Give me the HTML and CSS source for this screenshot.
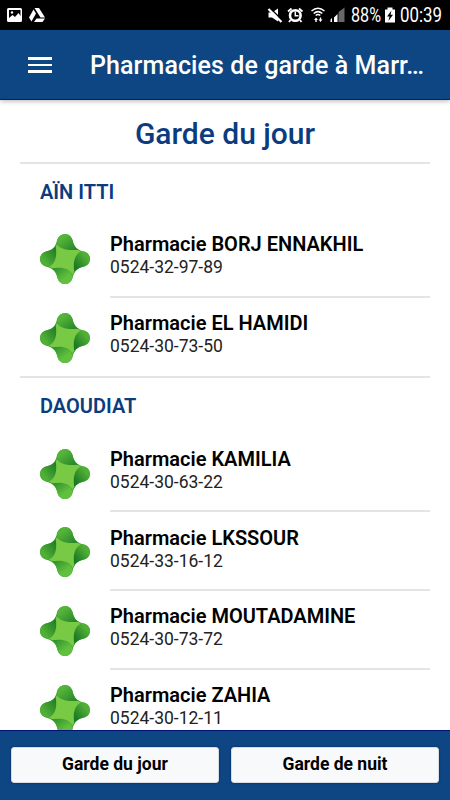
FILE: index.html
```
<!DOCTYPE html>
<html lang="fr">
<head>
<meta charset="utf-8">
<title>Pharmacies de garde</title>
<link rel="stylesheet" href="styles.css">
</head>
<body>
<svg class="defs" width="0" height="0" aria-hidden="true">
  <defs>
    <linearGradient id="top" x1="0" y1="0" x2="1" y2="1"><stop offset=".25" stop-color="#55b53a"/><stop offset=".95" stop-color="#238127"/></linearGradient>
    <linearGradient id="right" x1="1" y1="0" x2="0" y2="1"><stop offset=".25" stop-color="#50b036"/><stop offset=".8" stop-color="#1d7924"/></linearGradient>
    <linearGradient id="bottom" x1="1" y1="1" x2="0" y2="0"><stop offset=".35" stop-color="#61c03e"/><stop offset=".95" stop-color="#2b8c2b"/></linearGradient>
    <linearGradient id="left" x1="0" y1="1" x2="1" y2="0"><stop offset=".25" stop-color="#50b036"/><stop offset=".85" stop-color="#237f27"/></linearGradient>
    <symbol id="cross" viewBox="0 0 50 50">
      <path fill="#45a633" d="M17 6C20-2 30-2 32.500 6C34 13 38 16.500 44 17.500C52 20 52 30 44 32.500C37 34 34 38 32.500 44C30 52 20 52 17.500 44C16 37 12 34 6 32.500C-2 30-2 20 6 17.500C13 16 16 12 17 6Z"/>
      <path fill="url(#top)" d="M17 6C20-2 30-2 32.500 6Q34 14 39 16C27 18 18 14 17 6Z"/>
      <path fill="url(#right)" d="M44 17.500C52 20 52 30 44 32.500Q36 34 34 39C32 27 36 18 44 17.500Z"/>
      <path fill="url(#bottom)" d="M32.500 44C30 52 20 52 17.500 44Q16 36 11 34C23 32 32 36 32.500 44Z"/>
      <path fill="url(#left)" d="M6 32.500C-2 30-2 20 6 17.500Q14 16 16 11C18 23 14 32 6 32.500Z"/>
      <path fill="#78c943" d="M17 10C20 15 27 17 38 15.700Q39 17 41 17.500C35 20 32.500 27 34.300 38Q33 39 32.500 41C30 35 23 32.500 12 34.300Q11 33 9 32.500C15 30 17.500 23 15.700 12Q17 11.500 17 10Z"/>
    </symbol>
  </defs>
</svg>
<div class="screen">
  <div class="status">
    <svg width="450" height="30" viewBox="0 0 450 30">
      <g fill="#fff">
        <path fill-rule="evenodd" d="M8.500 8H20.500Q22 8 22 9.500V20.500Q22 22 20.500 22H8.500Q7 22 7 20.500V9.500Q7 8 8.500 8ZM9 10V18L12.500 15L15 17L18.500 13L20.500 16V10Z"/>
        <circle cx="12" cy="12.500" r="1.200"/>
        <path d="M34.500 8H39L45 17.500H40.500ZM33.500 9.500L36 13.500L31.500 21.500L29 17.500ZM36.500 18.500H45L42.500 22H34Z"/>
        <path d="M268.500 12.500H272L278 8.500V21.500L272 17.500H268.500Z"/>
        <path d="M314 20L316 17.500L318 20H316.700V22H315.300V20ZM318.500 19.500H319.800V17.500H321.200V19.500H322.500L320.500 22Z"/>
        <path d="M330.500 19.500L332 18V22H330.500ZM334 17.500L337.500 14V22H334Z"/>
        <path fill="#686868" d="M338.500 12L344.500 7.500V22H338.500Z"/>
        <path d="M387.500 7.500H392.500V9.500H395V22.500H385V9.500H387.500Z"/>
      </g>
      <path stroke="#000" stroke-width="1.500" d="M270.500 8.500L282 20"/>
      <path stroke="#fff" stroke-width="2.200" d="M268.500 9L281.500 22"/>
      <path d="M299 8.500L302.500 11.500M291.500 8.500L288 11.500M290.500 20L289 22M300 20L301.500 22" stroke="#fff" stroke-width="1.800"/>
      <circle cx="295.300" cy="15.500" r="5.300" fill="none" stroke="#fff" stroke-width="2.600"/>
      <path d="M295.300 11.500V15.800H298.500" fill="none" stroke="#fff" stroke-width="1.500"/>
      <g fill="none" stroke="#fff" stroke-width="1.500"><path d="M311.500 11Q318 5.500 324.500 11M313.700 13.500Q318 9.700 322.300 13.500M315.700 15.500Q318 13.700 320.300 15.500"/></g>
      <path d="M391.500 10.500L387 16.500H389.500L388.500 21L393 14.800H390.500Z"/>
      <g class="status-text"><text x="351" y="22" textLength="30" lengthAdjust="spacingAndGlyphs">88%</text><text x="400" y="22" textLength="42" lengthAdjust="spacingAndGlyphs">00:39</text></g>
    </svg>
  </div>
  <header class="toolbar">
    <div class="menu"><span></span><span></span><span></span></div>
    <h1>Pharmacies de garde à Marr…</h1>
  </header>
  <main class="content">
    <h2>Garde du jour</h2>
    <section>
      <h3>AÏN ITTI</h3>
      <div class="item"><svg class="logo"><use href="#cross"/></svg><div class="info"><strong>Pharmacie BORJ ENNAKHIL</strong><span>0524-32-97-89</span></div></div>
      <div class="item"><svg class="logo"><use href="#cross"/></svg><div class="info"><strong>Pharmacie EL HAMIDI</strong><span>0524-30-73-50</span></div></div>
    </section>
    <section>
      <h3>DAOUDIAT</h3>
      <div class="item"><svg class="logo"><use href="#cross"/></svg><div class="info"><strong>Pharmacie KAMILIA</strong><span>0524-30-63-22</span></div></div>
      <div class="item"><svg class="logo"><use href="#cross"/></svg><div class="info"><strong>Pharmacie LKSSOUR</strong><span>0524-33-16-12</span></div></div>
      <div class="item"><svg class="logo"><use href="#cross"/></svg><div class="info"><strong>Pharmacie MOUTADAMINE</strong><span>0524-30-73-72</span></div></div>
      <div class="item"><svg class="logo"><use href="#cross"/></svg><div class="info"><strong>Pharmacie ZAHIA</strong><span>0524-30-12-11</span></div></div>
    </section>
  </main>
  <footer class="footer"><button>Garde du jour</button><button>Garde de nuit</button></footer>
</div>
</body>
</html>
```
FILE: styles.css
```
* { box-sizing: border-box; }
body { margin: 0; font-family: Roboto, sans-serif; background: #fff; }
.defs { position: absolute; }
.screen { width: 450px; height: 800px; display: flex; flex-direction: column; overflow: hidden; }
.status { height: 30px; background: #000; flex: none; }
.status svg { display: block; }
.status-text { fill: #fff; font-size: 20px; }
.toolbar { height: 70px; flex: none; background: #0e4583; border-bottom: 1px solid #00216f; box-shadow: 0 1px 5px rgba(0,0,0,.3); display: flex; align-items: center; padding: 1px 20px 0 28px; z-index: 1; }
.menu { width: 24px; margin-right: 38px; display: flex; flex-direction: column; gap: 4px; flex: none; }
.menu span { height: 2.5px; background: #fff; }
h1 { margin: 0; font-size: 25px; font-weight: 500; color: #fff; line-height: 34px; padding-top: 1px; letter-spacing: .09px; white-space: nowrap; flex: 1; }
.content { flex: 1; min-height: 0; overflow: hidden; padding: 0 20px; }
h2 { margin: 0; height: 62px; padding-top: 14px; line-height: 40px; font-size: 30px; font-weight: 500; text-align: center; color: #0b3c80; }
section { border-top: 2px solid #e4e4e4; }
h3 { margin: 0; height: 55.300px; padding: 15px 20px 0; line-height: 26px; font-size: 20px; font-weight: 600; color: #0b3c80; }
.item { height: 78.600px; display: flex; padding-left: 20px; }
.logo { width: 50px; height: 50px; margin: 15px 20px 0 0; flex: none; }
.info { flex: 1; display: flex; flex-direction: column; padding-top: 13.200px; border-bottom: 2px solid #e4e4e4; }
.item:last-child .info { border-bottom: 0; }
.info strong { font-size: 20px; line-height: 24px; font-weight: 600; color: #000; }
.info span { font-size: 17.500px; line-height: 23.200px; font-weight: 400; color: #222; }
.footer { height: 70px; flex: none; background: #0e4583; border-top: 1px solid #00127a; display: flex; gap: 12px; padding: 16px 11px 17px; }
button { flex: 1; border: 1px solid #d7dbe2; border-radius: 3px; background: #f8f9fb; color: #000; font: 700 17.500px Roboto, sans-serif; padding: 0 0 2px; box-shadow: 0 0 2px #002669; }
```
